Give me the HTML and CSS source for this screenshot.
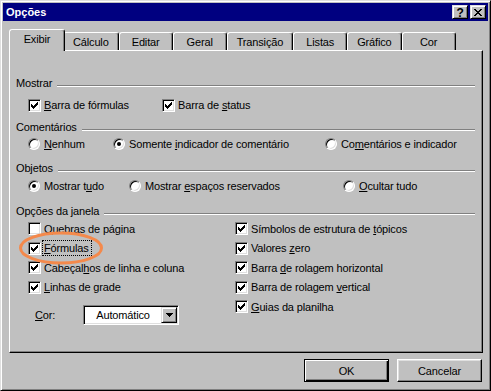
FILE: index.html
```html
<!DOCTYPE html>
<html lang="pt">
<head>
    <meta charset="UTF-8">
    <title>Opções</title>
    <link rel="stylesheet" href="styles.css">
</head>
<body>
    <div class="window">
        <div class="titlebar">
            <span class="title">Opções</span>
            <div class="caption-buttons">
                <span class="cap-btn help">?</span>
                <span class="cap-btn close">
                    <svg width="8" height="7" viewBox="0 0 8 7" shape-rendering="crispEdges"><path d="M0 0h2v1H0zM6 0h2v1H6zM1 1h2v1H1zM5 1h2v1H5zM2 2h4v1H2zM3 3h2v1H3zM2 4h4v1H2zM1 5h2v1H1zM5 5h2v1H5zM0 6h2v1H0zM6 6h2v1H6z"/></svg>
                </span>
            </div>
        </div>

        <div class="dialog-body">
            <div class="tabs">
                <div class="tab active">Exibir</div>
                <div class="tab">Cálculo</div>
                <div class="tab">Editar</div>
                <div class="tab">Geral</div>
                <div class="tab">Transição</div>
                <div class="tab">Listas</div>
                <div class="tab">Gráfico</div>
                <div class="tab">Cor</div>
            </div>

            <div class="panel">
                <!-- Mostrar -->
                <div class="group">
                    <div class="group-head">Mostrar</div>
                    <div class="row row-show">
                        <label class="opt"><span class="check"><svg class="tick" width="11" height="11" viewBox="0 0 11 11" shape-rendering="crispEdges"><path d="M2 4h1v3H2zM3 5h1v3H3zM4 6h1v3H4zM5 5h1v3H5zM6 4h1v3H6zM7 3h1v3H7zM8 2h1v3H8z"/></svg></span><span><u>B</u>arra de fórmulas</span></label>
                        <label class="opt"><span class="check"><svg class="tick" width="11" height="11" viewBox="0 0 11 11" shape-rendering="crispEdges"><path d="M2 4h1v3H2zM3 5h1v3H3zM4 6h1v3H4zM5 5h1v3H5zM6 4h1v3H6zM7 3h1v3H7zM8 2h1v3H8z"/></svg></span><span>Barra de <u>s</u>tatus</span></label>
                    </div>
                </div>

                <!-- Comentários -->
                <div class="group group-comments">
                    <div class="group-head">Comentários</div>
                    <div class="row row-comments">
                        <label class="opt"><span class="radio"></span><span><u>N</u>enhum</span></label>
                        <label class="opt"><span class="radio on"></span><span>Somente <u>i</u>ndicador de comentário</span></label>
                        <label class="opt"><span class="radio"></span><span>Co<u>m</u>entários e indicador</span></label>
                    </div>
                </div>

                <!-- Objetos -->
                <div class="group group-objects">
                    <div class="group-head">Objetos</div>
                    <div class="row row-objects">
                        <label class="opt"><span class="radio on"></span><span>Mostrar t<u>u</u>do</span></label>
                        <label class="opt"><span class="radio"></span><span>Mostrar <u>e</u>spaços reservados</span></label>
                        <label class="opt"><span class="radio"></span><span><u>O</u>cultar tudo</span></label>
                    </div>
                </div>

                <!-- Opções da janela -->
                <div class="group group-window">
                    <div class="group-head">Opções da janela</div>
                    <div class="win-opts">
                        <div class="col">
                            <label class="opt line"><span class="check"></span><span><u>Q</u>uebras de página</span></label>
                            <label class="opt line"><span class="check"><svg class="tick" width="11" height="11" viewBox="0 0 11 11" shape-rendering="crispEdges"><path d="M2 4h1v3H2zM3 5h1v3H3zM4 6h1v3H4zM5 5h1v3H5zM6 4h1v3H6zM7 3h1v3H7zM8 2h1v3H8z"/></svg></span><span class="focus"><u>F</u>órmulas</span></label>
                            <label class="opt line"><span class="check"><svg class="tick" width="11" height="11" viewBox="0 0 11 11" shape-rendering="crispEdges"><path d="M2 4h1v3H2zM3 5h1v3H3zM4 6h1v3H4zM5 5h1v3H5zM6 4h1v3H6zM7 3h1v3H7zM8 2h1v3H8z"/></svg></span><span>Cabeçal<u>h</u>os de linha e coluna</span></label>
                            <label class="opt line"><span class="check"><svg class="tick" width="11" height="11" viewBox="0 0 11 11" shape-rendering="crispEdges"><path d="M2 4h1v3H2zM3 5h1v3H3zM4 6h1v3H4zM5 5h1v3H5zM6 4h1v3H6zM7 3h1v3H7zM8 2h1v3H8z"/></svg></span><span><u>L</u>inhas de grade</span></label>
                            <div class="color-row">
                                <span class="color-label"><u>C</u>or:</span>
                                <div class="combo">
                                    <span class="combo-text">Automático</span>
                                    <span class="combo-btn">
                                        <svg width="7" height="4" viewBox="0 0 7 4" shape-rendering="crispEdges"><path d="M0 0h7v1H0zM1 1h5v1H1zM2 2h3v1H2zM3 3h1v1H3z"/></svg>
                                    </span>
                                </div>
                            </div>
                        </div>
                        <div class="col">
                            <label class="opt line"><span class="check"><svg class="tick" width="11" height="11" viewBox="0 0 11 11" shape-rendering="crispEdges"><path d="M2 4h1v3H2zM3 5h1v3H3zM4 6h1v3H4zM5 5h1v3H5zM6 4h1v3H6zM7 3h1v3H7zM8 2h1v3H8z"/></svg></span><span>Símbolos de estrutura de <u>t</u>ópicos</span></label>
                            <label class="opt line"><span class="check"><svg class="tick" width="11" height="11" viewBox="0 0 11 11" shape-rendering="crispEdges"><path d="M2 4h1v3H2zM3 5h1v3H3zM4 6h1v3H4zM5 5h1v3H5zM6 4h1v3H6zM7 3h1v3H7zM8 2h1v3H8z"/></svg></span><span>Valores <u>z</u>ero</span></label>
                            <label class="opt line"><span class="check"><svg class="tick" width="11" height="11" viewBox="0 0 11 11" shape-rendering="crispEdges"><path d="M2 4h1v3H2zM3 5h1v3H3zM4 6h1v3H4zM5 5h1v3H5zM6 4h1v3H6zM7 3h1v3H7zM8 2h1v3H8z"/></svg></span><span>Barra <u>d</u>e rolagem horizontal</span></label>
                            <label class="opt line"><span class="check"><svg class="tick" width="11" height="11" viewBox="0 0 11 11" shape-rendering="crispEdges"><path d="M2 4h1v3H2zM3 5h1v3H3zM4 6h1v3H4zM5 5h1v3H5zM6 4h1v3H6zM7 3h1v3H7zM8 2h1v3H8z"/></svg></span><span>Barra de rolagem <u>v</u>ertical</span></label>
                            <label class="opt line"><span class="check"><svg class="tick" width="11" height="11" viewBox="0 0 11 11" shape-rendering="crispEdges"><path d="M2 4h1v3H2zM3 5h1v3H3zM4 6h1v3H4zM5 5h1v3H5zM6 4h1v3H6zM7 3h1v3H7zM8 2h1v3H8z"/></svg></span><span><u>G</u>uias da planilha</span></label>
                        </div>
                    </div>
                </div>
            </div>

            <div class="actions">
                <span class="btn btn-default">OK</span>
                <span class="btn">Cancelar</span>
            </div>
        </div>

        <!-- highlight drawn over the screenshot -->
        <svg class="mark" width="86" height="35" viewBox="0 0 86 35">
            <ellipse cx="43" cy="17" rx="40.5" ry="15" fill="none" stroke="#f4894b" stroke-width="3"/>
        </svg>
    </div>
</body>
</html>
```

FILE: styles.css
```css
body {
    margin: 0;
    background-color: #c0c0c0;
    font-family: "Liberation Sans", Arial, sans-serif;
    font-size: 11px;
    letter-spacing: -0.15px;
    color: #000;
}
u {
    text-decoration: underline;
    text-underline-offset: 1px;
}

.window {
    position: relative;
    width: 491px;
    height: 391px;
    box-sizing: border-box;
    padding: 2px;
    background-color: #c0c0c0;
    border: 1px solid;
    border-color: #dfdfdf #000 #000 #dfdfdf;
    box-shadow: inset 1px 1px #fff, inset -1px -1px #808080;
}

/* title bar */
.titlebar {
    height: 18px;
    padding: 0 2px 0 3px;
    background-color: #000080;
    color: #fff;
    display: flex;
    align-items: center;
    justify-content: space-between;
}
.title {
    font-weight: bold;
    letter-spacing: 0;
}
.caption-buttons {
    display: flex;
    gap: 2px;
}
.cap-btn {
    width: 16px;
    height: 14px;
    box-sizing: border-box;
    display: flex;
    align-items: center;
    justify-content: center;
    background-color: #c0c0c0;
    color: #000;
    border: 1px solid;
    border-color: #dfdfdf #000 #000 #dfdfdf;
    box-shadow: inset 1px 1px #fff, inset -1px -1px #808080;
}
.cap-btn.help {
    font-weight: bold;
    font-size: 12px;
    padding-top: 1px;
}

/* tabs */
.dialog-body {
    padding: 8px 5px 0 6px;
}
.tabs {
    height: 21px;
    padding-left: 2px;
    display: flex;
    align-items: flex-end;
}
.tab {
    position: relative;
    height: 18px;
    min-width: 54px;
    box-sizing: border-box;
    padding: 1px 9px 0;
    display: flex;
    align-items: center;
    justify-content: center;
    border: 1px solid;
    border-bottom: none;
    border-color: #fff #000 transparent #fff;
    border-radius: 3px 3px 0 0;
    box-shadow: inset -1px 0 #808080;
    white-space: nowrap;
}
.tab.active {
    z-index: 1;
    height: 22px;
    min-width: 56px;
    margin: 0 -2px -1px;
    padding: 0 9px 3px;
    background-color: #c0c0c0;
}

/* panel */
.panel {
    height: 303px;
    box-sizing: border-box;
    padding: 25px 7px 0 6px;
    border: 1px solid;
    border-color: #fff #000 #000 #fff;
    box-shadow: inset -1px -1px #808080;
}
.group-head {
    height: 14px;
    display: flex;
    align-items: center;
    white-space: nowrap;
}
.group-head::after {
    content: "";
    flex: 1;
    margin: 5px 0 0 5px;
    border-top: 1px solid #808080;
    border-bottom: 1px solid #fff;
}
.group-comments {
    margin-top: 5px;
}
.group-objects {
    margin-top: 7px;
}
.group-window {
    margin-top: 8px;
}

.row {
    height: 20px;
    padding-left: 12px;
    display: grid;
    align-items: center;
}
.row-show {
    margin-top: 5px;
    grid-template-columns: 134px auto;
}
.row-comments {
    grid-template-columns: 85px 212px auto;
}
.row-objects {
    margin-top: 1px;
    grid-template-columns: 101px 214px auto;
}

.opt {
    display: flex;
    align-items: center;
    white-space: nowrap;
}
.check {
    flex: none;
    width: 13px;
    height: 13px;
    box-sizing: border-box;
    margin-right: 3px;
    background-color: #fff;
    border: 1px solid;
    border-color: #808080 #fff #fff #808080;
    box-shadow: inset 1px 1px #000, inset -1px -1px #dfdfdf;
}
.tick {
    display: block;
}
.radio {
    flex: none;
    width: 12px;
    height: 12px;
    box-sizing: border-box;
    margin-right: 4px;
    border-radius: 50%;
    background-color: #fff;
    border: 1px solid;
    border-color: #808080 #fff #fff #808080;
    box-shadow: inset 1px 1px #000, inset -1px -1px #dfdfdf;
    display: flex;
    align-items: center;
    justify-content: center;
}
.radio.on::after {
    content: "";
    width: 4px;
    height: 4px;
    border-radius: 50%;
    background-color: #000;
}

/* Opções da janela */
.win-opts {
    margin-top: 1px;
    padding-left: 12px;
    display: grid;
    grid-template-columns: 207px auto;
}
.line {
    height: 19.5px;
}
.focus {
    margin-left: -1px;
    padding: 1px 2px 1px 1px;
    outline: 1px dotted #000;
}
.color-row {
    margin-top: 8px;
    height: 20px;
    padding-left: 7px;
    display: flex;
    align-items: center;
}
.color-label {
    width: 48px;
}
.combo {
    width: 96px;
    height: 20px;
    box-sizing: border-box;
    padding: 1px;
    display: flex;
    background-color: #fff;
    border: 1px solid;
    border-color: #808080 #fff #fff #808080;
    box-shadow: inset 1px 1px #000, inset -1px -1px #dfdfdf;
}
.combo-text {
    flex: 1;
    line-height: 16px;
    text-align: center;
}
.combo-btn {
    width: 16px;
    height: 16px;
    box-sizing: border-box;
    display: flex;
    align-items: center;
    justify-content: center;
    background-color: #c0c0c0;
    border: 1px solid;
    border-color: #dfdfdf #000 #000 #dfdfdf;
    box-shadow: inset 1px 1px #fff, inset -1px -1px #808080;
}

/* bottom buttons */
.actions {
    margin-top: 6px;
    padding-right: 1px;
    display: flex;
    justify-content: flex-end;
    gap: 8px;
}
.btn {
    width: 85px;
    height: 23px;
    box-sizing: border-box;
    display: flex;
    align-items: center;
    justify-content: center;
    border: 1px solid;
    border-color: #fff #000 #000 #fff;
    box-shadow: inset -1px -1px #808080, inset 1px 1px #dfdfdf;
}
.btn-default {
    border-color: #000;
    box-shadow: inset 1px 1px #fff, inset -1px -1px #000, inset -2px -2px #808080;
}

/* orange highlight over the Fórmulas option */
.mark {
    position: absolute;
    left: 17px;
    top: 230px;
}
```
